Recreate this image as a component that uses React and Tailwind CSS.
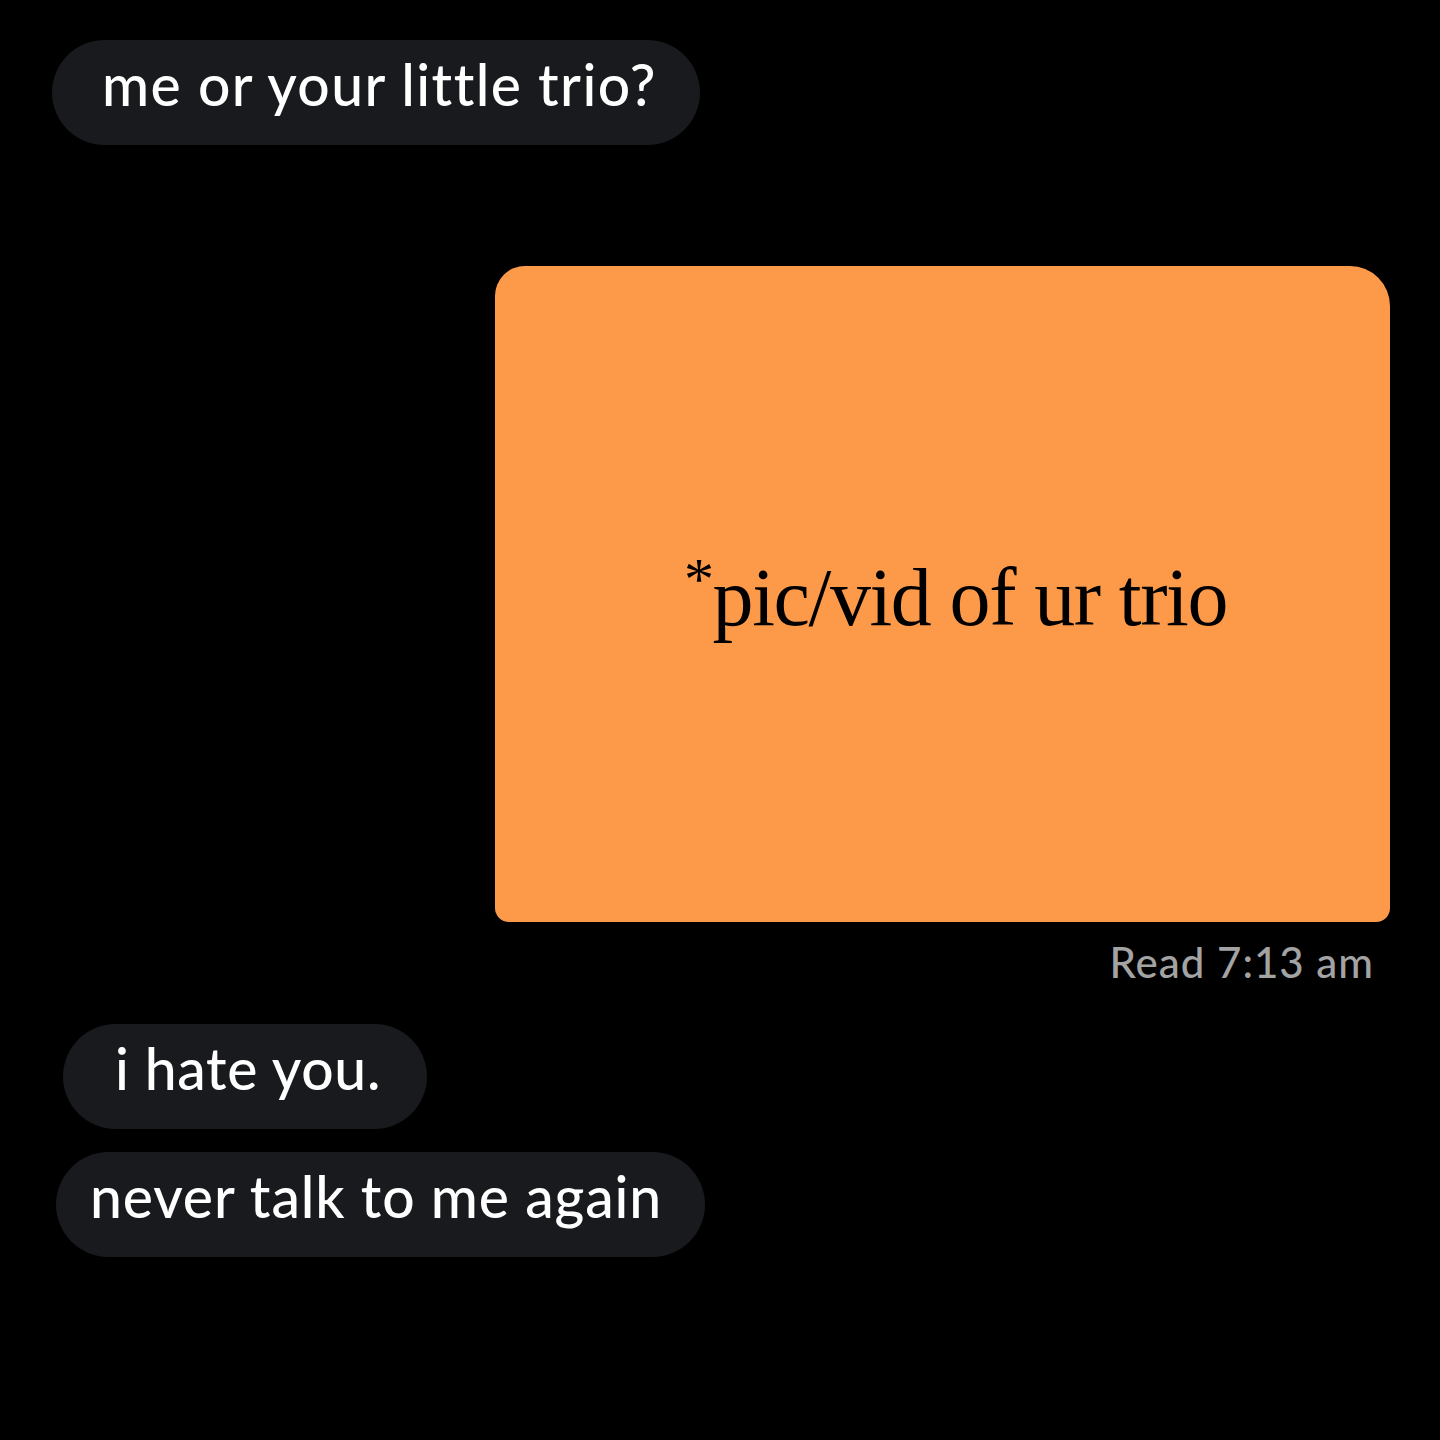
import React from "react";

const Bubble = ({ text, className = "" }) => (
  <div
    className={`self-start h-[105px] pb-[16px] flex items-center rounded-full bg-[#181a1e] text-white text-[57px] font-medium leading-none ${className}`}
    style={{ fontFamily: "Lato, 'Open Sans', sans-serif" }}
  >
    {text}
  </div>
);

export default function App() {
  return (
    <div className="w-[1440px] h-[1440px] bg-black flex flex-col overflow-hidden">
      <Bubble text="me or your little trio?" className="ml-[52px] mt-[40px] pl-[50px] pr-[43px] tracking-[1.4px]" />

      {/* image message */}
      <div className="self-end mr-[50px] mt-[121px] w-[895px] h-[656px] bg-[#fd9a4a] rounded-tl-[30px] rounded-tr-[40px] rounded-bl-[14px] rounded-br-[14px] flex items-center justify-center">
        <p
          className="text-black text-[82px] tracking-[-1.4px] leading-none ml-[26px]"
          style={{ fontFamily: "'Liberation Serif', serif" }}
        >
          <span className="text-[60px] align-[26px]">*</span>pic/vid of ur trio
        </p>
      </div>

      <div
        className="self-end mr-[66px] mt-[19px] text-[42px] tracking-[1px] font-medium text-[#a3a3a3] leading-none"
        style={{ fontFamily: "Lato, 'Open Sans', sans-serif" }}
      >
        Read 7:13 am
      </div>

      <Bubble text="i hate you." className="ml-[63px] mt-[41px] pl-[52px] pr-[46px] tracking-[0.7px]" />
      <Bubble text="never talk to me again" className="ml-[56px] mt-[23px] pl-[34px] pr-[43px] tracking-[0.9px]" />
    </div>
  );
}
